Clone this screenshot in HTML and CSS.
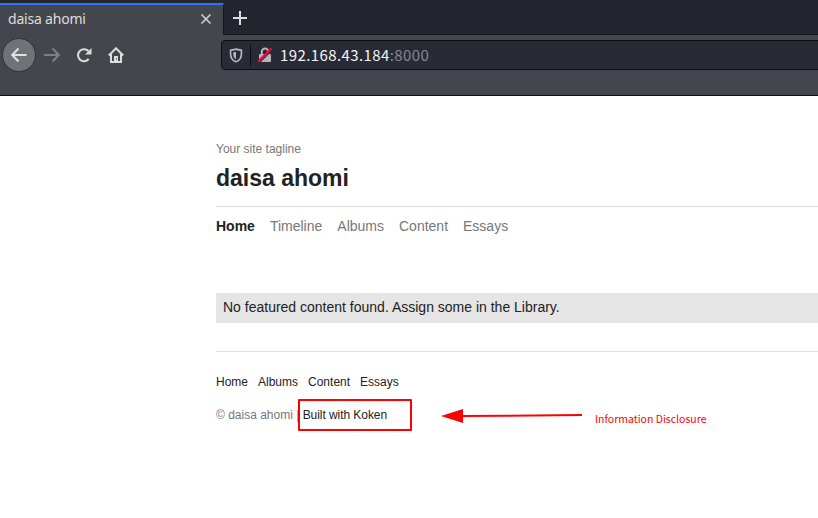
FILE: index.html
```html
<!DOCTYPE html>
<html lang="en">
<head>
<meta charset="utf-8">
<title>daisa ahomi</title>
<link rel="stylesheet" href="styles.css">
</head>
<body>
<div class="browser">
  <div class="tabs">
    <div class="tab"><span class="tab-title">daisa ahomi</span>
      <svg class="close" width="12" height="12" viewBox="0 0 12 12"><path d="M1.500 1.500l9 9M10.500 1.500l-9 9"/></svg>
    </div>
    <svg class="plus" width="16" height="16" viewBox="0 0 16 16"><path d="M8 1v14M1 8h14"/></svg>
  </div>
  <div class="toolbar">
    <span class="back"><svg width="16" height="16" viewBox="0 0 16 16"><path d="M15.500 8H1.500M7.500 1.500L1.200 8l6.300 6.500"/></svg></span>
    <svg class="forward" width="16" height="16" viewBox="0 0 16 16"><path d="M0 8h14.500M8.500 1.500L14.800 8l-6.300 6.500"/></svg>
    <svg class="reload" width="16" height="16" viewBox="0 0 16 16"><path class="line" d="M12.700 12A6 6 0 1 1 12.500 4.200"/><path class="fill" d="M15.500 1v6.500H9z"/></svg>
    <svg class="home" width="16" height="16" viewBox="0 0 16 16"><path class="line" d="M.8 8.500L8 1.300l7.200 7.200M3 7v8h10V7"/><path class="fill" d="M6 9h4v6H6z"/><path class="hole" d="M8 11.200h1v1.200H8z"/></svg>
    <div class="address">
      <svg class="shield" width="14" height="15" viewBox="0 0 14 15"><path class="line" d="M7 1.200L12.400 2.300V6c0 4-2 6.700-5.400 7.800C3.600 12.700 1.600 10 1.600 6V2.300z"/><path class="fill" d="M7 3.800v7.400C5.200 10.300 4.200 8.500 4.200 6V4.400z"/></svg>
      <span class="divider"></span>
      <svg class="lock" width="16" height="16" viewBox="0 0 16 16"><path class="shackle" d="M4.800 7V4.800a3.200 3.200 0 0 1 6.400 0V7"/><rect x="2" y="7" width="12" height="8" rx="1"/><path class="gap" d="M2.500 15.500L15.500 2.500"/><path class="slash" d="M1.200 14.500L14.500 1.200"/></svg>
      <span class="url">192.168.43.184<span class="port">:8000</span></span>
    </div>
  </div>
</div>
<main class="page">
  <p class="tagline">Your site tagline</p>
  <h1>daisa ahomi</h1>
  <nav class="main-nav"><a class="current">Home</a><a>Timeline</a><a>Albums</a><a>Content</a><a>Essays</a></nav>
  <p class="notice">No featured content found. Assign some in the Library.</p>
  <footer>
    <nav class="foot-nav"><a>Home</a><a>Albums</a><a>Content</a><a>Essays</a></nav>
    <p class="credit">© daisa ahomi | <a>Built with Koken</a></p>
  </footer>
</main>
<div class="highlight"></div>
<svg class="arrow" width="144" height="16" viewBox="0 0 144 16"><path class="shaft" d="M20 8.100L141 7"/><path class="head" d="M0 8L22 1v14z"/></svg>
<span class="note">Information Disclosure</span>
</body>
</html>
```
FILE: styles.css
```css
* { box-sizing: border-box; }
body { margin: 0; height: 518px; overflow: hidden; position: relative; background: #fff; font-family: "Liberation Sans", Arial, sans-serif; }
p, h1 { margin: 0; }
svg { display: block; flex: none; fill: none; }
.browser { height: 96px; background: #43464c; border-bottom: 1px solid #0d0f14; font-family: "Noto Sans CJK JP", "Noto Sans", sans-serif; }
.tabs { height: 35px; display: flex; background: #23262e; border-bottom: 1px solid #14161c; }
.tab { width: 224px; height: 32px; margin-top: 3px; padding: 0 11px 2px 8px; display: flex; align-items: center; justify-content: space-between; background: #43464c; border-top: 2px solid #2a75f0; border-right: 1px solid #14161c; }
.tab-title { font-family: "Noto Sans", sans-serif; font-size: 14px; line-height: 20px; letter-spacing: -.2px; color: #dedede; }
.close { stroke: #d0d0d0; stroke-width: 1.6; }
.plus { margin: 10px 0 0 8px; stroke: #dedede; stroke-width: 2; }
.toolbar { height: 60px; display: flex; padding-left: 2px; }
.back { width: 34px; height: 34px; margin-top: 3px; display: flex; align-items: center; justify-content: center; border-radius: 50%; background: #707277; border: 1px solid #303238; }
.back svg { stroke: #e2e2e0; stroke-width: 2; }
.forward { margin: 12px 0 0 8px; stroke: #7e8084; stroke-width: 2; }
.reload { margin: 12px 0 0 16px; }
.home { margin: 12px 0 0 16px; }
.line { stroke: #dcdcda; stroke-width: 2; }
.fill { fill: #dcdcda; }
.hole { fill: #43464c; }
.address { flex: 1; height: 30px; margin: 5px -6px 0 97px; display: flex; align-items: center; padding-left: 7px; background: #282a35; border: 1px solid #0d0f14; border-radius: 4px; }
.shield .line { stroke: #b4b5b9; stroke-width: 1.7; }
.shield .fill { fill: #b4b5b9; }
.divider { width: 1px; height: 22px; margin: 0 6px 0 7px; background: #0d0f14; }
.lock rect { fill: #b4b5b9; }
.shackle { stroke: #b4b5b9; stroke-width: 2; }
.gap { stroke: #282a35; stroke-width: 1.2; }
.slash { stroke: #f0053c; stroke-width: 2.2; }
.url { margin: -1px 0 0 7px; font-size: 15px; line-height: 24px; letter-spacing: .4px; color: #f4f4f4; }
.port { color: #87898f; }
.page { padding: 46px 0 0 216px; color: #222; }
.tagline { font-size: 12px; line-height: 14px; color: #777; }
h1 { margin-top: 7px; font-size: 23px; line-height: 30px; }
.main-nav { margin-top: 13px; padding-top: 11px; border-top: 1px solid #ddd; display: flex; gap: 15px; font-size: 14px; line-height: 16px; color: #777; }
.current { color: #222; font-weight: bold; }
.notice { height: 30px; margin-top: 59px; padding-left: 7px; background: #e5e5e5; font-size: 14px; line-height: 29px; }
footer { margin-top: 28px; padding-top: 23px; border-top: 1px solid #ddd; font-size: 12px; line-height: 14px; }
.foot-nav { display: flex; gap: 10px; }
.credit { margin-top: 19px; color: #777; }
.credit a { color: #222; letter-spacing: -.06px; }
.highlight { position: absolute; left: 298px; top: 399px; width: 114px; height: 32px; border: 2px solid #f00; border-radius: 1px; }
.arrow { position: absolute; left: 441px; top: 408px; }
.shaft { stroke: #f00; stroke-width: 2; }
.head { fill: #f00; }
.note { position: absolute; left: 595px; top: 411px; font: 10.5px/16px "Noto Sans CJK JP", sans-serif; color: #f00; white-space: nowrap; }
```
